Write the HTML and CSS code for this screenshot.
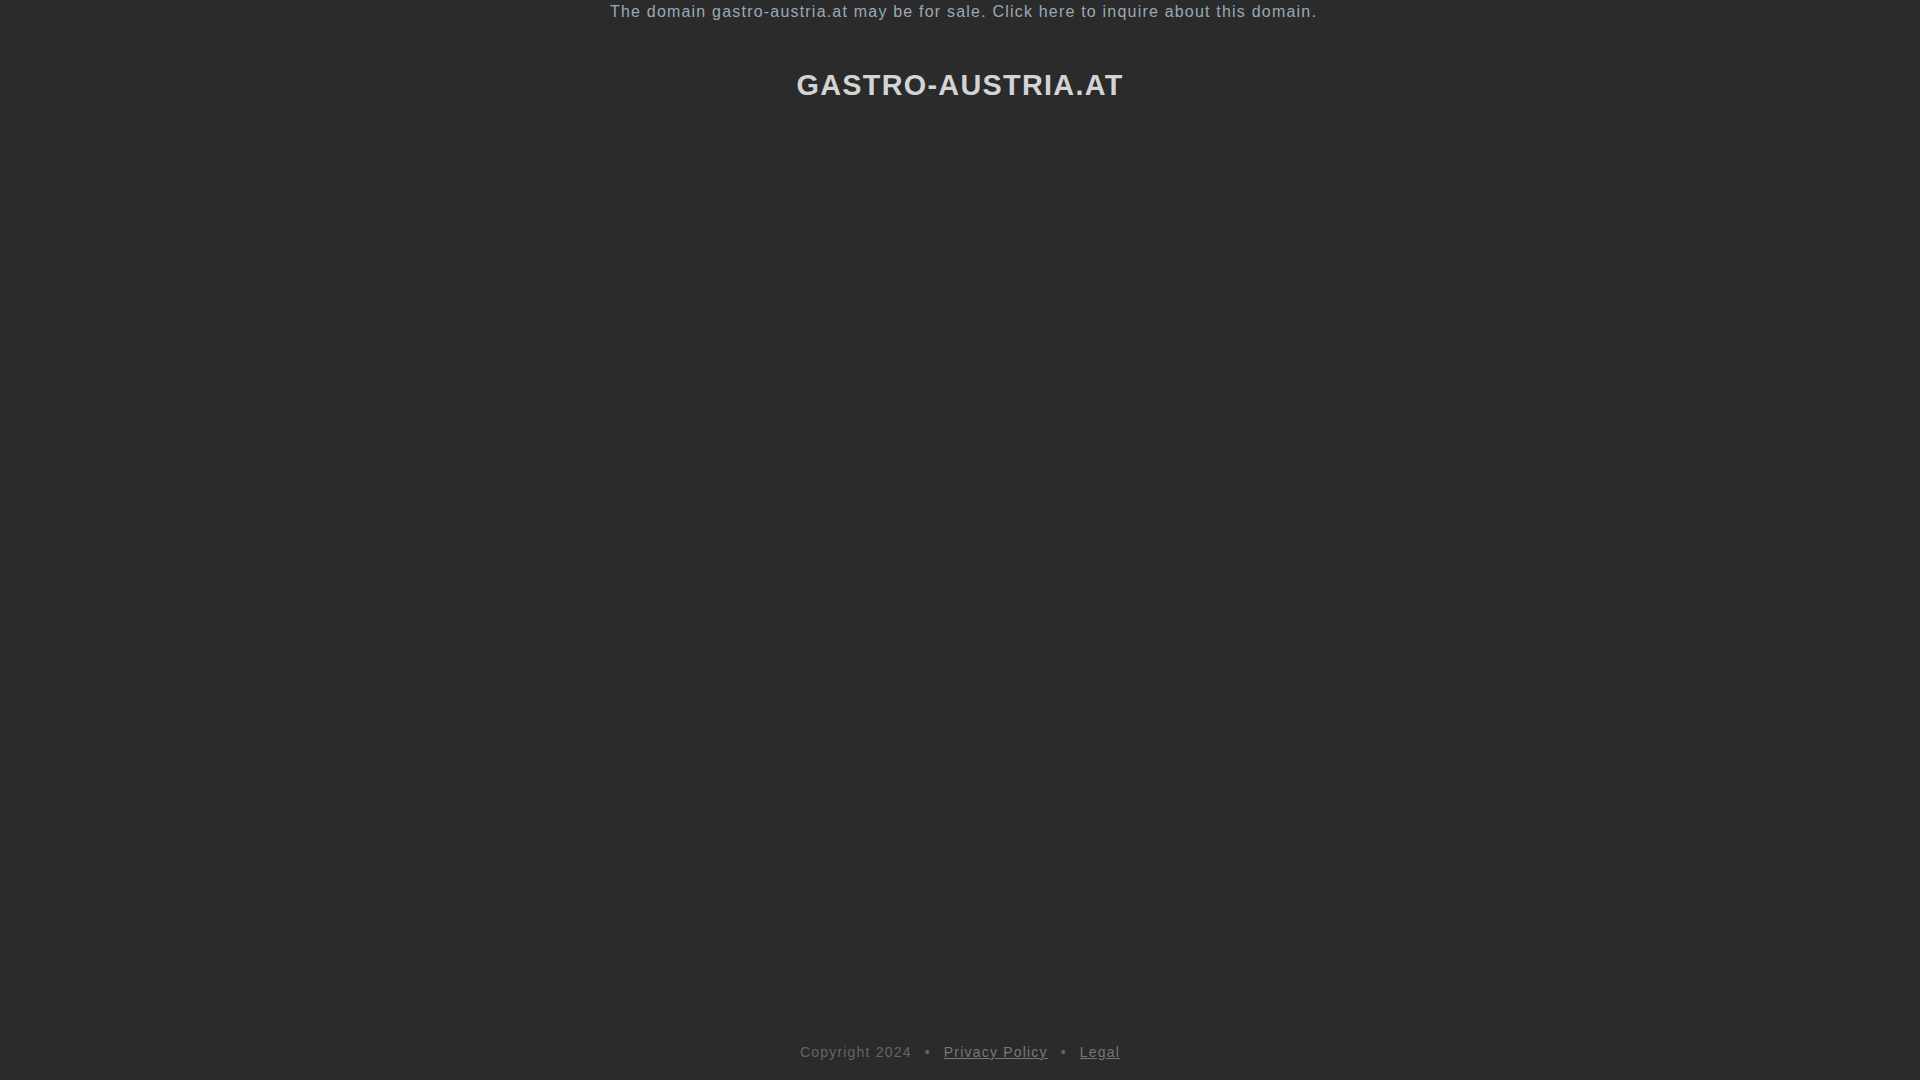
FILE: index.html
```html
<!DOCTYPE html>
<html lang="en">
<head>
<meta charset="utf-8">
<title>gastro-austria.at</title>
<link rel="stylesheet" href="styles.css">
</head>
<body>
<div class="page">
  <header class="top">
    <a class="banner" href="#">The domain gastro-austria.at may be for sale. Click here to inquire about this domain.</a>
    <h1 class="title">GASTRO-AUSTRIA.AT</h1>
  </header>
  <main class="content"></main>
  <footer class="footer">
    <span class="copy">Copyright 2024</span>
    <span class="dot">•</span>
    <a class="flink" href="#">Privacy Policy</a>
    <span class="dot">•</span>
    <a class="flink" href="#">Legal</a>
  </footer>
</div>
</body>
</html>
```

FILE: styles.css
```css
html, body {
  margin: 0;
  padding: 0;
  height: 100%;
}
body {
  background: #2b2b2b;
  font-family: "Liberation Sans", Arial, sans-serif;
}
.page {
  min-height: 100vh;
  display: flex;
  flex-direction: column;
}
.top {
  display: flex;
  flex-direction: column;
  align-items: center;
  padding-top: 3px;
}
.banner {
  font-size: 16px;
  letter-spacing: 1.2px;
  color: #9aa9b5;
  text-decoration: none;
  line-height: normal;
  margin-left: 7px;
}
.title {
  margin: 48px 0 0 0;
  font-size: 28.8px;
  font-weight: bold;
  letter-spacing: 1.3px;
  color: #d4d4d4;
  line-height: normal;
}
.content {
  flex: 1;
}
.footer {
  display: flex;
  justify-content: center;
  align-items: baseline;
  font-size: 14px;
  letter-spacing: 1.2px;
  color: #666666;
  padding-bottom: 20px;
  line-height: normal;
}
.dot {
  margin: 0 13px 0 13px;
}
.flink {
  color: #777777;
  text-decoration: underline;
}
```
